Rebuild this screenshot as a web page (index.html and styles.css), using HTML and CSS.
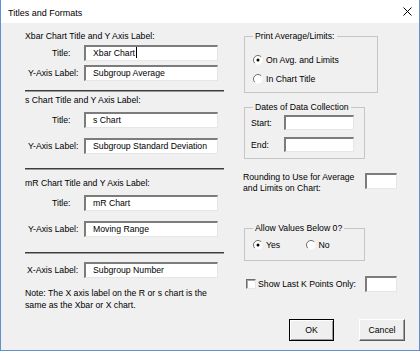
FILE: index.html
```html
<!DOCTYPE html>
<html>
<head>
<meta charset="utf-8">
<link rel="stylesheet" href="styles.css">
</head>
<body>
<div class="window">
  <div class="titlebar">
    <span class="title">Titles and Formats</span>
    <svg class="close" width="9" height="9" viewBox="0 0 9 9"><path d="M0.5 0.5L8.5 8.5M8.5 0.5L0.5 8.5" stroke="#000" stroke-width="1"/></svg>
  </div>
  <div class="content">
    <div class="left">
      <div class="heading h-first">Xbar Chart Title and Y Axis Label:</div>
      <div class="row row-a"><span class="lbl lbl-title">Title:</span><div class="field wide">Xbar Chart<span class="caret"></span></div></div>
      <div class="row row-b"><span class="lbl lbl-axis">Y-Axis Label:</span><div class="field wide">Subgroup Average</div></div>
      <div class="sep sep-1"></div>
      <div class="heading h-next">s Chart Title and Y Axis Label:</div>
      <div class="row row-c"><span class="lbl lbl-title">Title:</span><div class="field wide">s Chart</div></div>
      <div class="row row-d"><span class="lbl lbl-axis">Y-Axis Label:</span><div class="field wide">Subgroup Standard Deviation</div></div>
      <div class="sep sep-2"></div>
      <div class="heading h-third">mR Chart Title and Y Axis Label:</div>
      <div class="row row-c"><span class="lbl lbl-title">Title:</span><div class="field wide">mR Chart</div></div>
      <div class="row row-d"><span class="lbl lbl-axis">Y-Axis Label:</span><div class="field wide">Moving Range</div></div>
      <div class="sep sep-3"></div>
      <div class="row row-x"><span class="lbl lbl-x">X-Axis Label:</span><div class="field wide">Subgroup Number</div></div>
      <div class="note">Note: The X axis label on the R or s chart is the<br>same as the Xbar or X chart.</div>
    </div>
    <div class="right">
      <fieldset class="group group-print">
        <legend>Print Average/Limits:</legend>
        <div class="opt opt-first">
          <svg class="radio" width="10" height="10" viewBox="0 0 10 10"><circle cx="5" cy="5" r="4.5" fill="#fff"/><path d="M8.2 1.8A4.5 4.5 0 0 0 1.8 8.2" fill="none" stroke="#6e6e6e" stroke-width="1"/><circle cx="5" cy="5" r="1.5" fill="#000"/></svg>
          <span>On Avg. and Limits</span>
        </div>
        <div class="opt opt-second">
          <svg class="radio" width="10" height="10" viewBox="0 0 10 10"><circle cx="5" cy="5" r="4.5" fill="#fff"/><path d="M8.2 1.8A4.5 4.5 0 0 0 1.8 8.2" fill="none" stroke="#6e6e6e" stroke-width="1"/></svg>
          <span>In Chart Title</span>
        </div>
      </fieldset>
      <fieldset class="group group-dates">
        <legend>Dates of Data Collection</legend>
        <div class="date-row date-start"><span class="date-lbl">Start:</span><div class="field date"></div></div>
        <div class="date-row date-end"><span class="date-lbl">End:</span><div class="field date"></div></div>
      </fieldset>
      <div class="round-row">
        <div class="round-text">Rounding to Use for Average<br>and Limits on Chart:</div>
        <div class="field small round-field"></div>
      </div>
      <fieldset class="group group-allow">
        <legend>Allow Values Below 0?</legend>
        <div class="yesno">
          <div class="opt opt-inline">
            <svg class="radio" width="10" height="10" viewBox="0 0 10 10"><circle cx="5" cy="5" r="4.5" fill="#fff"/><path d="M8.2 1.8A4.5 4.5 0 0 0 1.8 8.2" fill="none" stroke="#6e6e6e" stroke-width="1"/><circle cx="5" cy="5" r="1.5" fill="#000"/></svg>
            <span>Yes</span>
          </div>
          <div class="opt opt-inline">
            <svg class="radio" width="10" height="10" viewBox="0 0 10 10"><circle cx="5" cy="5" r="4.5" fill="#fff"/><path d="M8.2 1.8A4.5 4.5 0 0 0 1.8 8.2" fill="none" stroke="#6e6e6e" stroke-width="1"/></svg>
            <span>No</span>
          </div>
        </div>
      </fieldset>
      <div class="k-row">
        <span class="check"></span>
        <span class="k-text">Show Last K Points Only:</span>
        <div class="field small k-field"></div>
      </div>
      <div class="buttons">
        <div class="btn btn-ok">OK</div>
        <div class="btn btn-cancel">Cancel</div>
      </div>
    </div>
  </div>
</div>
</body>
</html>
```

FILE: styles.css
```css
* { box-sizing: border-box; }

body {
  margin: 0;
  font-family: "Liberation Sans", Arial, sans-serif;
  font-size: 8.7px;
  color: #000;
}

.window {
  width: 420px;
  height: 351px;
  border: 1px solid #5e91cf;
  border-top: none;
  background: #f0f0f0;
  display: flex;
  flex-direction: column;
}

.titlebar {
  height: 23px;
  background: #fff;
  display: flex;
  align-items: center;
  justify-content: space-between;
  padding: 2px 7px 0 7px;
}

.title { font-size: 9px; }

.close { display: block; margin-top: -3px; }

.content {
  flex: 1;
  display: flex;
  padding-left: 24px;
  gap: 19px;
}

/* ---------- left column ---------- */
.left {
  width: 199px;
  display: flex;
  flex-direction: column;
}

.heading {
  height: 12px;
  line-height: 12px;
  white-space: nowrap;
}
.h-first { margin-top: 7px; }
.h-next { margin-top: 2px; }
.h-third { margin-top: 7px; }

.row {
  display: flex;
  align-items: center;
  height: 16px;
}
.row-a { margin-top: 3px; }
.row-b { margin-top: 4px; }
.row-c { margin-top: 6px; }
.row-d { margin-top: 10px; }
.row-x { margin-top: 8px; }

.lbl {
  width: 59px;
  flex: none;
  white-space: nowrap;
}
.lbl-title { padding-left: 27px; }
.lbl-axis { padding-left: 3px; }
.lbl-x { padding-left: 2px; }

.field {
  background: #fff;
  border-style: solid;
  border-width: 2px 1px 1px 2px;
  border-color: #7c7c7c #e6e6e6 #e6e6e6 #7c7c7c;
  height: 16px;
  line-height: 13px;
  white-space: nowrap;
  flex: none;
}
.wide {
  width: 134px;
  padding-left: 7px;
}

.caret {
  display: inline-block;
  width: 1px;
  height: 11px;
  background: #000;
  vertical-align: -2px;
  margin-left: 1px;
}

.sep {
  width: 199px;
  height: 2px;
  border-top: 1px solid #3c3c3c;
  border-bottom: 1px solid #9a9a9a;
}
.sep-1 { margin-top: 9px; }
.sep-2 { margin-top: 14px; }
.sep-3 { margin-top: 15px; }

.note {
  margin-top: 9px;
  line-height: 12px;
  white-space: nowrap;
}

/* ---------- right column ---------- */
.right {
  width: 162px;
  display: flex;
  flex-direction: column;
}

.group {
  margin: 0 0 0 1px;
  border: 1px solid #c6c6c6;
  padding: 0 6px;
  min-width: 0;
}
.group legend {
  padding: 0 2px;
  margin-left: 2px;
  line-height: 12px;
  white-space: nowrap;
}

.group-print {
  width: 134px;
  margin-top: 7px;
  padding-top: 11px;
  padding-bottom: 6px;
}
.group-dates {
  width: 121px;
  margin-top: 8px;
  padding-top: 2px;
  padding-bottom: 6px;
}
.group-allow {
  width: 121px;
  margin-top: 28px;
  padding-top: 4px;
  padding-bottom: 8px;
}

.opt {
  display: flex;
  align-items: center;
  gap: 3px;
  height: 14px;
  white-space: nowrap;
}
.radio { display: block; flex: none; }
.opt-first { margin-left: 2px; }
.opt-second { margin-left: 2px; margin-top: 5px; }

.yesno {
  display: flex;
  margin-left: 2px;
}
.opt-inline { width: 57px; }

.date-row {
  display: flex;
  align-items: center;
}
.date-end { margin-top: 7px; }
.date-lbl { width: 33px; }
.date {
  width: 70px;
  height: 15px;
}

.round-row {
  display: flex;
  justify-content: space-between;
  margin-top: 13px;
  padding-right: 8px;
}
.round-text {
  line-height: 11px;
  white-space: nowrap;
}
.small {
  width: 32px;
  height: 16px;
}
.round-field { margin-top: 1px; }

.k-row {
  display: flex;
  align-items: center;
  margin-top: 15px;
  padding-left: 3px;
  padding-right: 8px;
  height: 16px;
}
.check {
  width: 10px;
  height: 10px;
  background: #fff;
  border-style: solid;
  border-width: 1px;
  border-color: #6e6e6e #e6e6e6 #e6e6e6 #6e6e6e;
  box-shadow: inset 1px 1px 0 #a8a8a8;
  flex: none;
}
.k-text {
  margin-left: 2px;
  white-space: nowrap;
}
.k-field { margin-left: auto; }

.buttons {
  display: flex;
  margin-top: 27px;
  padding-left: 46px;
  gap: 25px;
}
.btn {
  height: 22px;
  display: flex;
  align-items: center;
  justify-content: center;
  background: #efefef;
}
.btn-ok {
  width: 45px;
  border: 1px solid #000;
  box-shadow: inset 1px 1px 0 #fff, inset -1px -1px 0 #9a9a9a;
}
.btn-cancel {
  width: 46px;
  border-style: solid;
  border-width: 1px;
  border-color: #fff #5a5a5a #5a5a5a #fff;
  box-shadow: inset -1px -1px 0 #a0a0a0;
}
```
